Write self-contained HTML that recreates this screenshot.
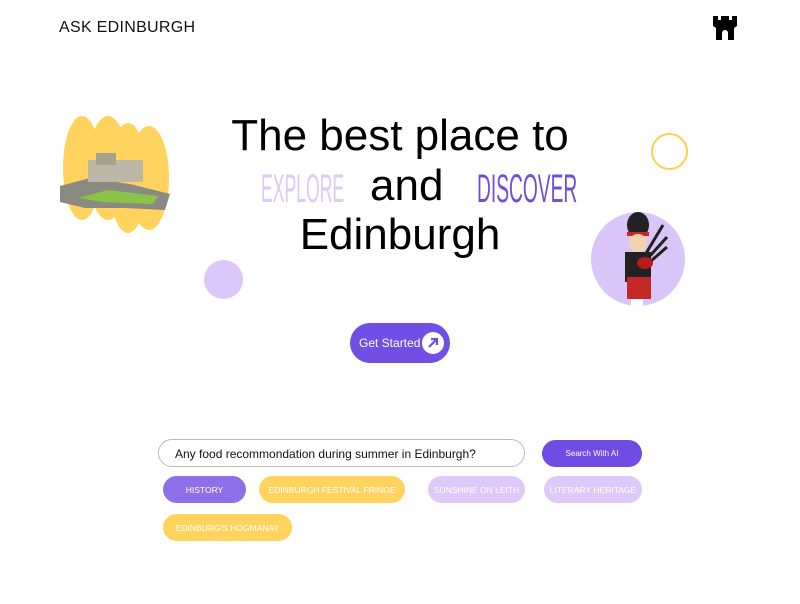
<!DOCTYPE html>
<html><head><style>
*{margin:0;padding:0;box-sizing:border-box}
body{width:800px;height:604px;background:#fff;position:relative;overflow:hidden;font-family:"Liberation Sans",sans-serif}
.a{position:absolute}
.logo{left:59px;top:19px;font-size:16px;letter-spacing:0.3px;color:#111}
.t{left:0;width:800px;text-align:center;font-size:44px;color:#000;line-height:49px}
.chip{position:absolute;height:27px;border-radius:14px;color:#fff;font-size:8.5px;display:flex;align-items:center;justify-content:center}
.cond{position:absolute;transform-origin:0 0;font-size:40px;line-height:40px;white-space:nowrap}
</style></head><body>
<div class="a logo">ASK EDINBURGH</div>
<svg class="a" style="left:712px;top:15px" width="26" height="26" viewBox="0 0 26 26"><path d="M1 1h5v4h3V1h8v4h3V1h5v10l-3 2v12h-6v-7a2 2 0 0 0-6 0v7H4V13L1 11z" fill="#000"/></svg>

<svg class="a" style="left:58px;top:108px" width="115" height="135">
<g fill="#ffd35e"><ellipse cx="24" cy="60" rx="19" ry="52"/><ellipse cx="50" cy="60" rx="20" ry="52"/><ellipse cx="70" cy="70" rx="19" ry="55"/><ellipse cx="91" cy="70" rx="20" ry="52"/></g>
<g><path d="M2 78l30-8 40 6 40 10-5 16-40-2-40 0-25-6z" fill="#8a8a80"/><rect x="30" y="52" width="55" height="22" fill="#bdb7a8"/><rect x="38" y="45" width="20" height="12" fill="#a8a090"/><path d="M20 90l30-8 50 6-5 8-50-2z" fill="#8bc34a"/></g>
</svg>
<div class="a" style="left:204px;top:260px;width:39px;height:39px;border-radius:50%;background:#dcc7fb"></div>
<div class="a" style="left:651px;top:133px;width:37px;height:37px;border-radius:50%;border:2px solid #ffcf54"></div>
<div class="a" style="left:591px;top:212px;width:94px;height:94px;border-radius:50%;background:#d9c5f7"></div>
<svg class="a" style="left:615px;top:205px" width="60" height="110">
<ellipse cx="23" cy="20" rx="11" ry="13" fill="#222"/><rect x="12" y="27" width="22" height="4" fill="#c62828"/><ellipse cx="23" cy="38" rx="9" ry="9" fill="#f6d3b0"/>
<rect x="10" y="47" width="26" height="30" fill="#222"/><rect x="12" y="72" width="24" height="22" fill="#c62828"/><rect x="16" y="94" width="12" height="8" fill="#fff"/>
<path d="M30 50l18-30M34 52l18-20M36 56l16-14" stroke="#222" stroke-width="3"/><ellipse cx="30" cy="58" rx="8" ry="6" fill="#b71c1c"/></svg>

<div class="a t" style="top:111px">The best place to</div>
<div class="cond" style="left:261px;top:169px;color:#dcc8fb;transform:scaleX(0.44)">EXPLORE</div>
<div class="a" style="left:370px;top:161px;font-size:44px;line-height:49px">and</div>
<div class="cond" style="left:477px;top:169px;color:#6c4fe0;transform:scaleX(0.48)">DISCOVER</div>
<div class="a t" style="top:210px">Edinburgh</div>

<div class="a" style="left:350px;top:323px;width:100px;height:40px;border-radius:20px;background:#6f4fe4;color:#fff;font-size:12px;display:flex;align-items:center;padding-left:9px">Get Started
<svg style="position:absolute;left:72px;top:9px" width="22" height="22"><circle cx="11" cy="11" r="11" fill="#fff"/><path d="M7 15l8-8M9 7h6v6" stroke="#6f4fe4" stroke-width="2.2" fill="none"/></svg></div>

<div class="a" style="left:158px;top:439px;width:367px;height:28px;border:1.5px solid #bbb;border-radius:14px;font-size:12px;padding:7px 0 0 16px;color:#111">Any food recommondation during summer in Edinburgh?</div>
<div class="chip" style="left:542px;top:440px;width:100px;background:#6f4be3;font-size:8px">Search With AI</div>
<div class="chip" style="left:163px;top:476px;width:83px;background:#8c6fe9">HISTORY</div>
<div class="chip" style="left:259px;top:476px;width:146px;background:#ffd35e">EDINBURGH FESTIVAL FRINGE</div>
<div class="chip" style="left:428px;top:476px;width:97px;background:#dfc9fb">SUNSHINE ON LEITH</div>
<div class="chip" style="left:544px;top:476px;width:98px;background:#dfc9fb">LITERARY HERITAGE</div>
<div class="chip" style="left:163px;top:514px;width:129px;background:#ffd35e">EDINBURG'S HOGMANAY</div>
</body></html>
